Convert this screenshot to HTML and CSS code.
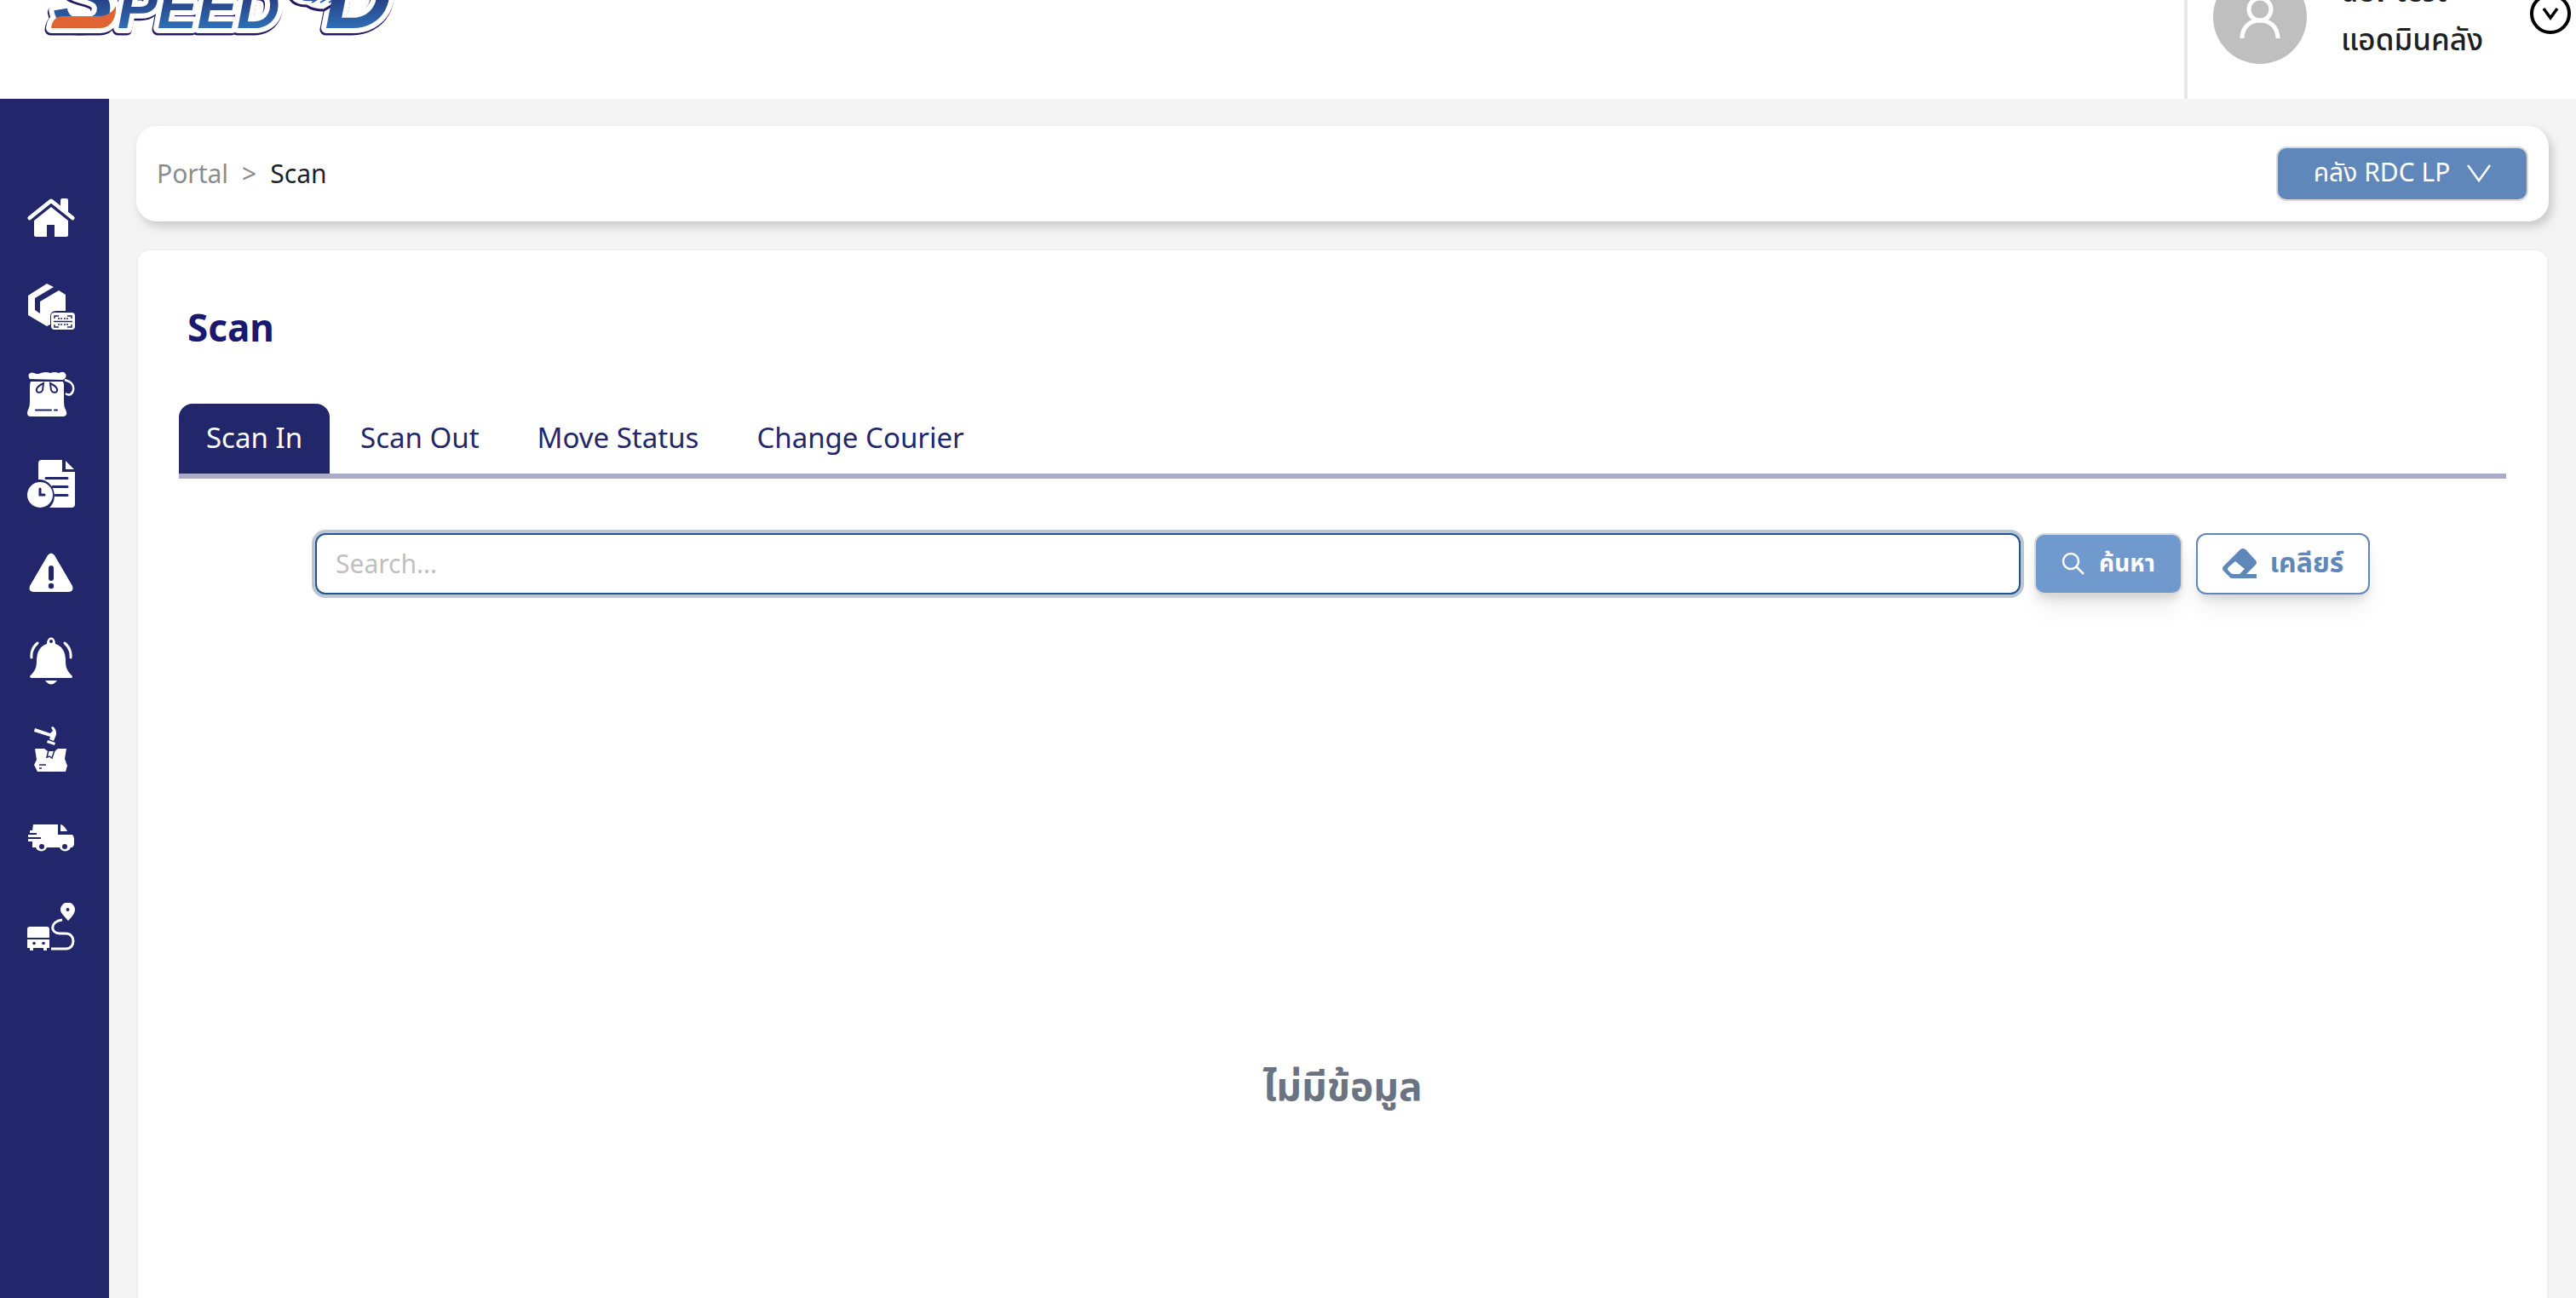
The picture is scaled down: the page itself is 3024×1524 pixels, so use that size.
FILE: index.html
```html
<!DOCTYPE html>
<html lang="th">
<head>
<meta charset="utf-8">
<title>Scan</title>
<link rel="stylesheet" href="styles.css">
</head>
<body>
<div class="page">
  <header class="header">
    <a class="logo" href="#" aria-label="Speed-D">
      <svg width="480" height="192" viewBox="0 -76 480 192">
        <defs>
          <linearGradient id="blue" gradientUnits="userSpaceOnUse" x1="0" y1="-10" x2="0" y2="33">
            <stop offset="0" stop-color="#26357a"/><stop offset="1" stop-color="#2f6fb5"/>
          </linearGradient>
          <g id="word">
            <text class="mark mark-large" x="62" y="32">S</text>
            <text class="mark" x="138" y="33">PEED</text>
            <text class="mark mark-large" x="381" y="33">D</text>
          </g>
          <path id="swoosh" d="M60 33c1-9 6-14 14-14h42c9 0 16-4 20-12 1 14-6 26-18 26z"/>
        </defs>
        <g class="mark-shadow"><use href="#word" x="-1" y="2"/><use href="#swoosh" x="-1" y="2"/></g>
        <g class="mark-outline"><use href="#word"/><use href="#swoosh"/></g>
        <path d="M340-2c4 7 12 9 20 9 6 4 13 5 20 5l12-7 8-7z" fill="#fff" stroke="#241a62" stroke-width="3"/>
        <path d="M350-3c7 4 15 4 22 1M366 3l10-6M376 3l10-6M386 3l10-6" fill="none" stroke="#2d5a9d" stroke-width="2"/>
        <g fill="url(#blue)"><use href="#word"/></g>
        <use href="#swoosh" fill="#e06433"/>
      </svg>
    </a>
    <div class="user">
      <span class="avatar">
        <svg width="56" height="56" viewBox="0 0 56 56" fill="none" stroke="#fff" stroke-width="5"><circle cx="28" cy="19" r="13"/><path d="M7 53c0-13 9-21 21-21s21 8 21 21"/></svg>
      </span>
      <div class="user-text"><span>dev test</span><span class="role">แอดมินคลัง</span></div>
      <button class="user-menu" type="button" aria-label="Account menu">
        <svg width="48" height="48" viewBox="0 0 48 48" fill="none" stroke="#000"><circle cx="24" cy="24" r="22" stroke-width="4"/><path d="M16 18l8 11 8-11" stroke-width="3.5"/></svg>
      </button>
    </div>
  </header>
  <div class="body">
    <nav class="sidebar" aria-label="Main">
      <a href="#" aria-label="Home"><svg viewBox="0 0 56 56"><path d="M28 15l20 16v17q0 2-2 2H32V36H23v14H10q-2 0-2-2V31z"/><path d="M3 28L28 8l25 20" fill="none" stroke="#fff" stroke-width="5" stroke-linecap="round" stroke-linejoin="round"/><path d="M3 32L28 12l25 20" fill="none" stroke="#22266a" stroke-width="2"/><path d="M39 7q0-2 2-2h5q2 0 2 2v17l-9-8z"/></svg></a>
      <a href="#" aria-label="Parcels"><svg viewBox="0 0 56 56"><path d="M1 15L23 1l8 4L9 18v14l6 4V22l22-13 8 5v19H34q-7 0-7 7v9l-4 2L1 38z"/><rect x="28" y="35" width="28" height="20" rx="4"/><path d="M32 42v-3h5M47 39h5v3M32 49v3h5M47 52h5v-3M31 45.500h22M37 41v2M40 41v2M44 41v2M47 41v2M37 48v2M40 48v2M44 48v2M47 48v2" class="cut cut-thin"/></svg></a>
      <a href="#" aria-label="Bags"><svg viewBox="0 0 56 56"><path d="M3 9c-4-6 1-9 5-7q4 2 8 0 6-2 11 0 5-2 10 0 6-3 8 1t-3 7zM4 12h38q1 2 1 6v16q0 8 2 11c3 6 0 8-3 8H4c-4 0-5-3-3-8q2-3 2-11V20q0-6 1-8z"/><path d="M19 14c-6 3-9 6-8 9s6 2 7-1zM27 14c6 3 9 6 8 9s-6 2-7-1zM10 45.500h18M32 45.500h3" class="cut"/><path d="M44 10c8 2 11 7 10 12s-5 7-9 4" fill="none" stroke="#fff" stroke-width="2.500"/></svg></a>
      <a href="#" aria-label="History"><svg viewBox="0 0 56 56"><path d="M17 0h24v14h15v38q0 4-4 4H26c12-10 5-34-13-33V4q0-4 4-4zM45 1l10 10H45z"/><circle cx="15" cy="41" r="15"/><path d="M22 21.500h25M30 31.500h17M33 41.500h14M15 34v7h5" class="cut cut-bold"/></svg></a>
      <a href="#" aria-label="Problems"><svg viewBox="0 0 56 56"><path d="M24 8q4-5 8 0l21 36q2 6-4 7H7q-6-1-4-7z"/><path d="M28 23v12" class="cut cut-heavy"/><circle cx="28" cy="44" r="3.200" fill="#22266a"/></svg></a>
      <a href="#" aria-label="Notifications"><svg viewBox="0 0 56 56"><path d="M3 46c6-6 8-10 8-18q0-16 12-20c0-10 10-10 10 0q12 4 12 20c0 8 2 12 8 18 0 2-1 2-2 2H5q-2 0-2-2zM21 51h14q-7 9-14 0z"/><circle cx="28" cy="5" r="2" fill="#22266a"/><path d="M12 7Q4 14 5 24M44 7q8 7 7 17" fill="none" stroke="#fff" stroke-width="3" stroke-linecap="round"/></svg></a>
      <a href="#" aria-label="Damaged"><svg viewBox="0 0 56 56"><path d="M9 3l18 6 3-3-2-4 2-1c4 3 5 8 3 12l-2 5-5-2 1-3L8 7zM24 17l9 3-1 3-9-3zM9 27h11l4 3h8l4-3h10l-2 12 3 8-2 7H12l-4-8 3-6z"/><path d="M25 29l-2 8 3-1 3 2 3-9M14 46h8M14 50h3" class="cut cut-thin"/></svg></a>
      <a href="#" aria-label="Delivery"><svg viewBox="0 0 56 56"><path d="M7 12h29v12h17q2 2 2 5v7l-2 3h-2a7 7 0 0 1-13 0H23a7 7 0 0 1-13 0H6v-7H1v-3h15v-2H1v-3h10v-2H3v-3h3zM39 12c4 1 6 4 8 8h-8z"/><circle cx="17" cy="38" r="3" fill="#22266a"/><circle cx="44" cy="38" r="3" fill="#22266a"/></svg></a>
      <a href="#" aria-label="Route"><svg viewBox="0 0 56 56"><path d="M3 28h20q3 0 3 3v10H0V31q0-3 3-3zM0 43h26v10h-3v3h-4v-3H7v3H3v-3H0zM48 21c-5-6-9-9-9-13a8 8 0 0 1 17 0c0 4-3 8-8 13z"/><circle cx="8" cy="47.500" r="1.800" fill="#22266a"/><circle cx="19" cy="47.500" r="1.800" fill="#22266a"/><circle cx="47.500" cy="8" r="2" fill="#22266a"/><path d="M41 20c-15 2-14 16-3 16h7c12 0 12 18 0 18H28" fill="none" stroke="#fff" stroke-width="3"/></svg></a>
    </nav>
    <main class="main">
      <div class="topbar">
        <nav class="crumbs" aria-label="Breadcrumb"><a href="#">Portal</a><span>&gt;</span><span class="current">Scan</span></nav>
        <button class="warehouse" type="button">คลัง RDC LP
          <svg width="28" height="24" viewBox="0 0 28 24" fill="none" stroke="#fff" stroke-width="2.500"><path d="M1 2l13 18L27 2"/></svg>
        </button>
      </div>
      <section class="card">
        <h1>Scan</h1>
        <div class="tabs" role="tablist">
          <button class="tab active" type="button" role="tab" aria-selected="true">Scan In</button>
          <button class="tab" type="button" role="tab">Scan Out</button>
          <button class="tab" type="button" role="tab">Move Status</button>
          <button class="tab" type="button" role="tab">Change Courier</button>
        </div>
        <form class="search">
          <input type="text" placeholder="Search..." aria-label="Search">
          <button class="btn find" type="button">
            <svg width="28" height="28" viewBox="0 0 28 28" fill="none" stroke="#fff" stroke-width="2.500"><circle cx="11" cy="11" r="9"/><path d="M17 17l9 9"/></svg>ค้นหา
          </button>
          <button class="btn clear" type="button">
            <svg width="40" height="36" viewBox="0 0 40 36"><path fill="#6087b9" fill-rule="evenodd" d="M21 1q3-2 6 0l12 13q2 3 0 5L28 30h12v5H11q-2 0-3-2l-7-7q-2-2 0-5zM15 15l-8 7q-2 2 0 4l3 3q1 1 3 1h7l6-6z"/></svg>เคลียร์
          </button>
        </form>
        <p class="empty">ไม่มีข้อมูล</p>
      </section>
    </main>
  </div>
</div>
</body>
</html>
```
FILE: styles.css
```css
* { box-sizing: border-box; }
html { overflow: hidden; }
body {
  margin: 0;
  overflow: hidden;
  height: 100vh;
  background: #f4f4f4;
  color: #1f1f1f;
  font-family: "Noto Sans", "Noto Sans Thai", "Open Sans", sans-serif;
  font-size: 30px;
}
button, input { font: inherit; margin: 0; }
a { color: inherit; text-decoration: none; }
svg { display: block; flex: none; }

/* The page is scrolled past the top of the header */
.page {
  margin-top: -76px;
  min-height: calc(100vh + 76px);
  display: flex;
  flex-direction: column;
}
.header {
  height: 192px;
  background: #fff;
  display: flex;
  justify-content: space-between;
}
.mark { font: italic bold 70px "Liberation Sans", sans-serif; }
.mark-large { font-size: 110px; }
.mark-shadow { fill: #241a62; stroke: #241a62; stroke-width: 13px; stroke-linejoin: round; }
.mark-outline { fill: #fff; stroke: #fff; stroke-width: 12px; stroke-linejoin: round; }
.user {
  display: flex;
  align-items: center;
  border-left: 4px solid #e5e7eb;
  padding: 0 6px 0 30px;
}
.avatar {
  width: 110px;
  height: 110px;
  border-radius: 50%;
  background: #bfbfbf;
  display: grid;
  place-items: center;
}
.user-text {
  width: 222px;
  margin-left: 40px;
  padding-bottom: 4px;
  display: flex;
  flex-direction: column;
  font-size: 32px;
  font-weight: 600;
  line-height: 56px;
}
.user-text .role { font-size: 35px; font-weight: 500; }
.user-menu { border: 0; padding: 0 0 8px; background: none; }

.body { flex: 1; display: flex; }
.sidebar {
  width: 128px;
  flex: none;
  background: #22266a;
  padding: 112px 40px 48px 32px;
  display: flex;
  flex-direction: column;
  gap: 48px;
}
.sidebar svg { width: 56px; height: 56px; fill: #fff; }
.sidebar .cut {
  fill: none;
  stroke: #22266a;
  stroke-width: 2;
  stroke-linecap: round;
}
.sidebar .cut-thin { stroke-width: 1.5; stroke-linecap: butt; }
.sidebar .cut-bold { stroke-width: 3; }
.sidebar .cut-heavy { stroke-width: 6; }

.main {
  flex: 1;
  min-width: 0;
  padding: 32px 32px 0;
  display: flex;
  flex-direction: column;
  gap: 32px;
}
.topbar {
  height: 112px;
  padding: 0 24px;
  border-radius: 24px;
  background: #fff;
  box-shadow: 4px 6px 12px rgba(0, 0, 0, 0.18);
  display: flex;
  align-items: center;
  justify-content: space-between;
}
.crumbs { display: flex; gap: 16px; padding-bottom: 2px; color: #8c8c8c; }
.crumbs .current { color: #1f1f1f; }
.warehouse {
  width: 296px;
  height: 64px;
  border: 2px solid #d9d9d9;
  border-radius: 12px;
  background: #6087b9;
  color: #fff;
  box-shadow: 0 4px 0 rgba(0, 0, 0, 0.02);
  display: flex;
  align-items: center;
  justify-content: center;
  gap: 20px;
}
.card {
  flex: 1;
  border: 2px solid #f0f0f0;
  border-bottom: 0;
  border-radius: 16px 16px 0 0;
  background: #fff;
  padding: 58px 48px 0;
}
h1 {
  margin: 0 0 58px;
  padding-left: 10px;
  font-size: 44px;
  line-height: 64px;
  font-weight: 700;
  color: #191970;
}
.tabs {
  display: flex;
  gap: 4px;
  border-bottom: 6px solid #aaabc9;
}
.tab {
  height: 82px;
  border: 0;
  border-radius: 16px 16px 0 0;
  padding: 0 32px 4px;
  background: none;
  color: #22266a;
  font-size: 33px;
}
.tab.active { background: #22266a; color: #fff; }
.search {
  margin: 64px 0 0;
  padding: 0 160px;
  display: flex;
  gap: 16px;
}
.search input {
  flex: 1;
  min-width: 0;
  height: 72px;
  border: 2px solid #20538f;
  border-radius: 12px;
  padding: 0 22px 2px;
  outline: 0;
  box-shadow: 0 0 0 4px #bbc7cf;
}
.search input::placeholder { color: #bfbfbf; opacity: 1; }
.btn {
  height: 72px;
  border-radius: 12px;
  padding: 0;
  font-weight: 700;
  display: flex;
  align-items: center;
  justify-content: center;
  gap: 16px;
  box-shadow: 0 20px 30px -6px rgba(0, 0, 0, 0.08), 0 8px 12px -4px rgba(0, 0, 0, 0.14);
}
.find { width: 174px; border: 2px solid #d9d9d9; background: #7099cd; color: #fff; font-size: 28px; }
.clear { width: 204px; border: 2px solid #6087b9; background: #fff; color: #6087b9; font-size: 32px; }
.empty {
  margin: 540px 0 0;
  text-align: center;
  font-size: 46px;
  line-height: 72px;
  font-weight: 700;
  color: #6b7280;
}
```
